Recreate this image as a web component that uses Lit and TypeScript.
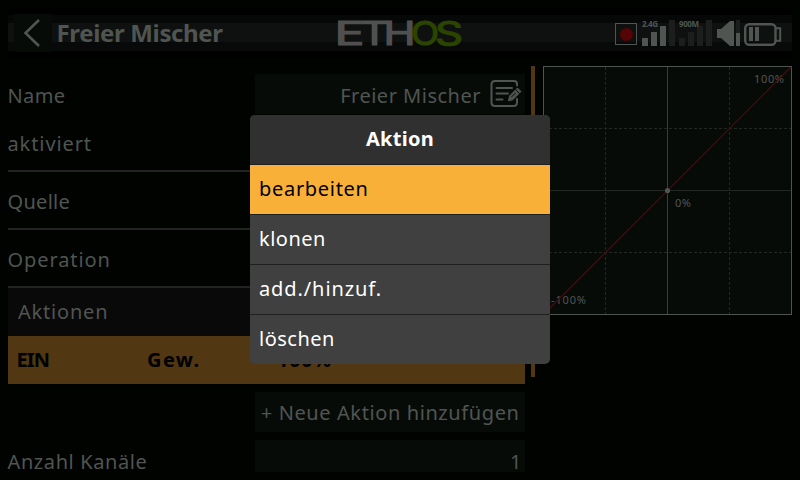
import { LitElement, html, css, svg } from "lit";
import { customElement } from "lit/decorators.js";

@customElement("status-icons")
class StatusIcons extends LitElement {
  static styles = css`
    :host { display: block; width: 170px; height: 32px; }
    svg { display: block; }
    .on { fill: #505552; }
    .off { fill: #1b1e1c; }
    .line { fill: none; stroke: #505552; }
    .rec { fill: #550505; }
    .band { fill: #505552; font: 700 8px "Noto Sans", sans-serif; letter-spacing: 0; }
  `;
  bars(x: number, active: number) {
    return [0, 1, 2, 3].map((i) => svg`<rect class=${i < active ? "on" : "off"} x=${x + i * 9} y=${22 - i * 6} width="6" height=${8 + i * 6}></rect>`);
  }
  render() {
    return html`<svg width="170" height="32" viewBox="0 0 170 32">
      <rect class="line" x="3.5" y="7.5" width="21" height="21"></rect>
      <circle class="rec" cx="14.5" cy="18.5" r="6.5"></circle>
      ${this.bars(30, 3)}
      ${this.bars(67, 0)}
      <text class="band" x="30" y="10.5" textLength="16">2.4G</text>
      <text class="band" x="67" y="10.5" textLength="20">900M</text>
      <path class="on" d="M105 13h4l9-8h4v25h-4l-9-8h-4z"></path>
      <rect class="off" x="124" y="4" width="4" height="13"></rect>
      <rect class="on" x="124" y="17" width="4" height="13"></rect>
      <rect class="line" x="133.2" y="8.2" width="30.3" height="20.6" rx="4" stroke-width="2.4"></rect>
      <path class="line" d="M164 12.2h4.2v12.6H164" stroke-width="2"></path>
      <path class="on" d="M137 11h4v14h-4zM143 11h4v14h-4z"></path>
    </svg>`;
  }
}

@customElement("mix-chart")
class MixChart extends LitElement {
  static styles = css`
    :host { display: block; width: 249px; height: 249px; background: #070b08; }
    svg { display: block; }
    .frame { fill: none; stroke: #4f5451; }
    .axis { stroke: #232724; }
    .cursor { stroke: #4b3a18; }
    .grid { stroke: #232724; stroke-dasharray: 3 2; }
    .curve { stroke: #500a0b; stroke-width: 1.2; }
    .dot { fill: #505552; }
    .tick { fill: #505552; font: 11px "Noto Sans", sans-serif; letter-spacing: 0; }
  `;
  render() {
    return html`<svg width="249" height="249" viewBox="0 0 249 249">
      <path class="grid" d="M62.5 1V248M186.5 1V248M1 62.5H248M1 186.5H248"></path>
      <path class="axis" d="M1 124.5H248"></path>
      <rect class="frame" x=".5" y=".5" width="248" height="248"></rect>
      <path class="cursor" d="M124.5 1V248"></path>
      <text class="tick" x="211" y="17" textLength="30">100%</text>
      <text class="tick" x="132" y="141" textLength="16">0%</text>
      <text class="tick" x="8" y="238" textLength="35">-100%</text>
      <path class="curve" d="M1 248L248 1"></path>
      <circle class="dot" cx="124.5" cy="124.5" r="2.6"></circle>
    </svg>`;
  }
}

@customElement("action-menu")
class ActionMenu extends LitElement {
  static styles = css`
    :host { display: block; width: 300px; height: 249px; border-radius: 5px; overflow: hidden; background: #404040; color: #fff; font: 20px "Noto Sans", sans-serif; }
    .head { height: 49px; line-height: 47px; background: #303030; text-align: center; font-weight: 700; letter-spacing: .3px; }
    .item { height: 49px; line-height: 47px; padding-left: 9px; border-top: 1px solid #202020; letter-spacing: .5px; white-space: nowrap; }
    .wide { letter-spacing: .9px; }
    .active { background: #f8b038; color: #000; letter-spacing: .7px; }
  `;
  items = [
    { text: "bearbeiten", style: "active" },
    { text: "klonen", style: "" },
    { text: "add./hinzuf.", style: "wide" },
    { text: "löschen", style: "" },
  ];
  render() {
    return html`<div class="head">Aktion</div>
      ${this.items.map((i) => html`<div class="item ${i.style}">${i.text}</div>`)}`;
  }
}

@customElement("app-root")
class AppRoot extends LitElement {
  static styles = css`
    :host { display: block; position: relative; width: 800px; height: 480px; overflow: hidden; background: #000300; color: #505552; font: 20px "Noto Sans", sans-serif; letter-spacing: .6px; }
    * { box-sizing: border-box; }
    .bar { display: flex; align-items: center; height: 50px; margin: 8px 8px 0; padding-left: 6px; background: linear-gradient(#000 0 7px, #060807 7px 15px, #0e1110 15px 34px, #070a08 34px 43px, #000 43px); }
    .back { width: 38px; height: 38px; margin-right: 4.5px; background: #070b08; flex: none; }
    .back path { fill: none; stroke: #505552; stroke-width: 2.6; }
    .title { font-size: 24px; font-weight: 700; letter-spacing: -.35px; line-height: 50px; width: 281.5px; white-space: nowrap; }
    .logo { flex: none; width: 126px; height: 42px; overflow: visible; }
    .logo text { font: 400 33px Inter, sans-serif; letter-spacing: 0; stroke-width: 1.2; }
    .grey { fill: #505050; stroke: #505050; }
    .green { fill: #2b4400; stroke: #2b4400; }
    status-icons { margin-left: 148px; margin-bottom: 2px; flex: none; }
    .main { display: flex; align-items: flex-start; padding: 8px 0 0 8px; height: 414px; overflow: hidden; }
    .form { width: 517px; padding-top: 8px; flex: none; }
    .row { display: grid; grid-template-columns: 247px 270px; height: 58px; align-items: center; white-space: nowrap; line-height: 28px; border-bottom: 2px solid #232323; }
    .first { height: 42px; border: 0; align-items: start; }
    .second { height: 56px; }
    .label { padding-top: 4px; margin-left: -.5px; }
    .second .label { padding-top: 1px; }
    .first .label { line-height: 44px; padding-top: 0; letter-spacing: .4px; }
    .wide { letter-spacing: .9px; }
    .tight { letter-spacing: .3px; }
    .box { display: flex; align-items: center; justify-content: flex-end; height: 40px; background: #070b08; }
    .name { padding-top: 3px; letter-spacing: .5px; }
    .edit { width: 32px; height: 30px; margin: -3px 3px 0 9px; }
    .edit path { fill: none; stroke: #505552; stroke-width: 2; stroke-linecap: round; stroke-linejoin: round; }
    .edit .pen { fill: #505552; stroke-width: 1; }
    .edit .nick { stroke: #070b08; stroke-width: 1; }
    .section { height: 48px; line-height: 47px; padding-left: 10px; background: #090909; letter-spacing: .8px; }
    .selected { display: grid; grid-template-columns: 130px 130px 1fr; height: 48px; line-height: 47px; padding-left: 9px; color: #000; background: #513812; font-weight: 700; letter-spacing: .6px; }
    .selected .state { letter-spacing: -.9px; margin-left: -.5px; }
    .selected .weight { letter-spacing: 1.4px; }
    .bottom { border: 0; height: 40px; margin-top: 8px; }
    .bottom .box { padding: 2px 5.5px 0 0; }
    .bottom .label { padding-top: 3px; }
    .bottom .number { padding: 4px 3px 0 0; }
    .scroll { width: 4px; height: 311px; background: #513812; margin: 0 8px 0 6px; flex: none; }
    .menu { position: absolute; left: 250px; top: 115px; }
  `;
  render() {
    return html`
      <div class="bar">
        <svg class="back" viewBox="0 0 38 38"><path d="M25 6L11.5 19L25 32"></path></svg>
        <div class="title">Freier Mischer</div>
        <svg class="logo" viewBox="0 0 126 42">
          <text class="grey" y="33.2" x="-3.4" textLength="30" lengthAdjust="spacingAndGlyphs">E</text>
          <text class="grey" y="33.2" x="22.5" textLength="28" lengthAdjust="spacingAndGlyphs">T</text>
          <text class="grey" y="33.2" x="45.5" textLength="32" lengthAdjust="spacingAndGlyphs">H</text>
          <text class="green" y="33.2" x="73.1" textLength="28" lengthAdjust="spacingAndGlyphs">O</text>
          <text class="green" y="33.2" x="97" textLength="28" lengthAdjust="spacingAndGlyphs">S</text>
        </svg>
        <status-icons></status-icons>
      </div>
      <div class="main">
        <div class="form">
          <div class="row first">
            <div class="label">Name</div>
            <div class="box name">Freier Mischer
              <svg class="edit" viewBox="0 0 32 30">
                <path d="M27 6.5V5Q27 2 24 2H5Q1.5 2 1.5 5.5V23.5Q1.5 27 5 27H23.5Q27 27 27 23.5V20M6.5 9H22M6.5 14.5H18M6.5 20.5H12.5"></path>
                <path class="pen" d="M18.5 21.5L19.5 17L27.5 9L31 12.5L23 20.5Z"></path>
                <path class="nick" d="M25.5 10.5L29.5 14.5M21.5 18L25.5 14"></path>
              </svg>
            </div>
          </div>
          <div class="row second"><div class="label wide">aktiviert</div></div>
          <div class="row"><div class="label tight">Quelle</div></div>
          <div class="row"><div class="label wide">Operation</div></div>
          <div class="section">Aktionen</div>
          <div class="selected"><span class="state">EIN</span><span class="weight">Gew.</span><span>100%</span></div>
          <div class="row bottom"><div></div><div class="box">+ Neue Aktion hinzufügen</div></div>
          <div class="row bottom"><div class="label">Anzahl Kanäle</div><div class="box number">1</div></div>
        </div>
        <div class="scroll"></div>
        <mix-chart></mix-chart>
      </div>
      <action-menu class="menu"></action-menu>`;
  }
}
